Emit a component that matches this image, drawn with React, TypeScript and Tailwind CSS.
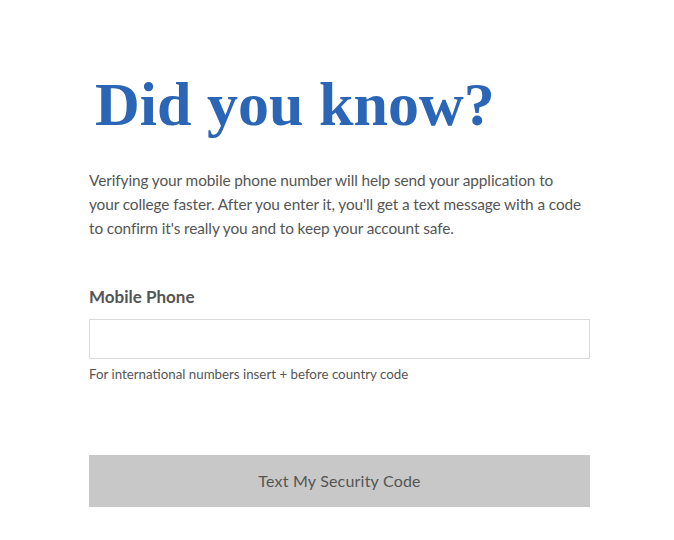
import React from "react";

const sans = { fontFamily: '"Lato", "Open Sans", sans-serif' };

export default function App() {
  return (
    <div className="min-h-[540px] w-[674px] bg-white">
      <div className="ml-[89px] w-[501px] pt-[66px]" style={sans}>
        <h1
          className="pl-[6px] text-[62px] font-bold leading-[76px] text-[#2b65b5]"
          style={{ fontFamily: '"Liberation Serif", "Times New Roman", serif' }}
        >
          Did you know?
        </h1>
        <p className="mt-[26px] whitespace-nowrap text-[15.4px] tracking-[-0.1px] leading-[24px] text-[#555555]">
          Verifying your mobile phone number will help send your application to
          <br />
          your college faster. After you enter it, you'll get a text message with a code
          <br />
          to confirm it's really you and to keep your account safe.
        </p>
        <label className="mt-[45px] block text-[17px] font-bold leading-[24px] text-[#555555]">
          Mobile Phone
        </label>
        <input
          type="tel"
          className="mt-[10px] block h-[40px] w-full border border-[#d9d9d9] bg-white px-3 outline-none"
        />
        <p className="mt-[6px] text-[13.3px] leading-[18px] text-[#555555]">
          For international numbers insert + before country code
        </p>
        <button
          type="button"
          className="mt-[72px] block h-[52px] w-full bg-[#c8c8c8] text-[16px] tracking-[0.2px] text-[#555555]"
        >
          Text My Security Code
        </button>
      </div>
    </div>
  );
}
